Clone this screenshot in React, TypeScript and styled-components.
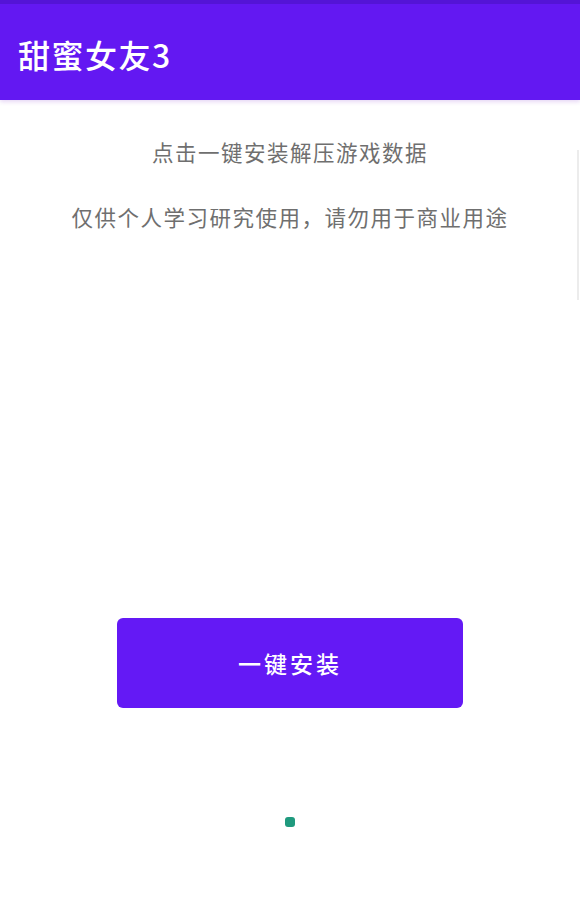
import styled, { createGlobalStyle } from 'styled-components';

const GlobalStyle = createGlobalStyle`
  html, body {
    margin: 0;
    padding: 0;
    background: #ffffff;
    font-family: "Noto Sans CJK SC", "Noto Sans", Roboto, sans-serif;
  }
`;

const Screen = styled.div`
  position: relative;
  display: flex;
  flex-direction: column;
  align-items: center;
  width: 580px;
  height: 902px;
  overflow: hidden;
  background: #ffffff;
`;

const AppBar = styled.header`
  display: flex;
  align-items: center;
  align-self: stretch;
  box-sizing: border-box;
  height: 100px;
  padding: 4px 0 0 18px;
  background: #6318f2;
  border-top: 4px solid #5414d6;
  box-shadow: 0 2px 4px rgba(120, 40, 200, 0.18);
`;

const Title = styled.h1`
  margin: 0;
  color: #ffffff;
  font-size: 32px;
  font-weight: 500;
  letter-spacing: 1.5px;
`;

const Notice = styled.p<{ $gap?: number }>`
  margin: ${(p) => p.$gap ?? 0}px 0 0;
  color: #6f6f6f;
  font-size: 21.5px;
  line-height: 30px;
  letter-spacing: 1.5px;
  text-align: center;
`;

const InstallButton = styled.button`
  margin-top: 386px;
  width: 346px;
  height: 90px;
  border: none;
  border-radius: 6px;
  background: #6419f5;
  color: #ffffff;
  font-family: inherit;
  font-size: 23px;
  font-weight: 500;
  letter-spacing: 3px;
  cursor: pointer;
`;

const Spinner = styled.span`
  margin-top: 109px;
  width: 10px;
  height: 10px;
  border-radius: 3px;
  background: #1f9a7e;
`;

const Scrollbar = styled.div`
  position: absolute;
  right: 1px;
  top: 150px;
  width: 2px;
  height: 150px;
  background: #ececec;
`;

const App = () => {
  return (
    <Screen>
      <GlobalStyle />
      <AppBar>
        <Title>甜蜜女友3</Title>
      </AppBar>
      <Notice $gap={37}>点击一键安装解压游戏数据</Notice>
      <Notice $gap={35}>仅供个人学习研究使用，请勿用于商业用途</Notice>
      <InstallButton>一键安装</InstallButton>
      <Spinner />
      <Scrollbar />
    </Screen>
  );
};

export default App;
